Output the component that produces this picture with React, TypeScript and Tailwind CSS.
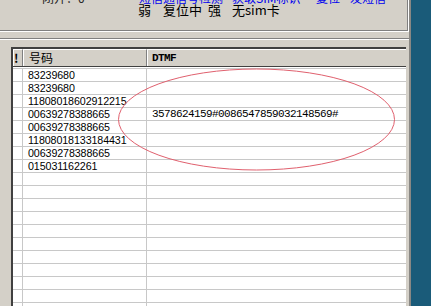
import React from 'react';

const rows: [string, string][] = [
  ['83239680', ''],
  ['83239680', ''],
  ['11808018602912215', ''],
  ['00639278388665', '3578624159#0086547859032148569#'],
  ['00639278388665', ''],
  ['11808018133184431', ''],
  ['00639278388665', ''],
  ['015031162261', ''],
  ...Array.from({ length: 11 }, () => ['', ''] as [string, string]),
];

const cjk = "font-['SimSun','Noto_Sans_CJK_SC',sans-serif]";

export default function App() {
  return (
    <div className="relative flex h-[306px] w-[431px] overflow-hidden bg-[#d4d0c8] text-black">
      <div className="flex w-[411px] flex-col border-r-2 border-[#8a8884]">
        {/* top panel */}
        <div className="h-[32px] border-b border-r border-b-white border-r-white">
          <div className="h-[31px] overflow-hidden border-b border-r border-[#808080]">
            <div className={`-mt-[8px] flex h-[12px] text-[12px] leading-[12px] ${cjk}`}>
              <span className="ml-[42px] w-[97px] text-[#222]">闭开：0</span>
              <span className="w-[93px] text-[#0000ee]">短信通信号检测</span>
              <span className="w-[84px] text-[#0000ee]">获取SIM标识</span>
              <span className="w-[34px] text-[#0000ee]">复位</span>
              <span className="text-[#0000ee]">发短信</span>
            </div>
            <div className={`ml-[138px] -mt-[1px] flex text-[13px] leading-[13px] ${cjk}`}>
              <span className="w-[25px]">弱</span>
              <span className="w-[45px]">复位中</span>
              <span className="w-[24px]">强</span>
              <span>无sim卡</span>
            </div>
          </div>
        </div>

        {/* lower panel */}
        <div className="mt-[6px] flex-1 border-t border-[#808080]">
          <div className="h-full border-t border-white pl-[11px] pr-[3px] pt-[7px]">
            <div className="h-full border-l-2 border-t-2 border-[#404040] bg-white">
              {/* header */}
              <div className={`flex h-[18px] border-b border-[#404040] bg-[#d4d0c8] text-[12px] leading-[16px] ${cjk}`}>
                <div className="w-[10px] overflow-hidden border-r border-t border-l border-r-[#808080] border-t-white border-l-white font-bold">!</div>
                <div className="w-[124px] border-r border-t border-l border-r-[#808080] border-t-white border-l-white pl-[5px]">号码</div>
                <div className="flex-1 border-t border-l border-t-white border-l-white pl-[4px] font-['Liberation_Mono',monospace] text-[11px] font-bold tracking-[-0.6px]">DTMF</div>
              </div>
              <div className="h-[2px] border-b border-[#c8c8c8]" />
              {rows.map(([num, dtmf], i) => (
                <div key={i} className="flex h-[13px] border-b border-[#c8c8c8] leading-[12px]">
                  <div className="w-[10px] border-r border-[#c8c8c8]" />
                  <div className="w-[124px] border-r border-[#c8c8c8] pl-[5px] font-['Liberation_Sans',sans-serif] text-[10.7px] tracking-[-0.1px]">
                    {num}
                  </div>
                  <div className="flex-1 pl-[5px] font-['Liberation_Mono',monospace] text-[11px] tracking-[-0.6px]">{dtmf}</div>
                </div>
              ))}
            </div>
          </div>
        </div>
      </div>
      <div className="flex-1 bg-[#1a5b79]" />

      {/* red annotation ellipse */}
      <svg className="pointer-events-none absolute left-0 top-0" width="431" height="306">
        <ellipse cx="256.5" cy="119.5" rx="138" ry="50.5" fill="none" stroke="#e0606e" strokeWidth="1" />
      </svg>
    </div>
  );
}
